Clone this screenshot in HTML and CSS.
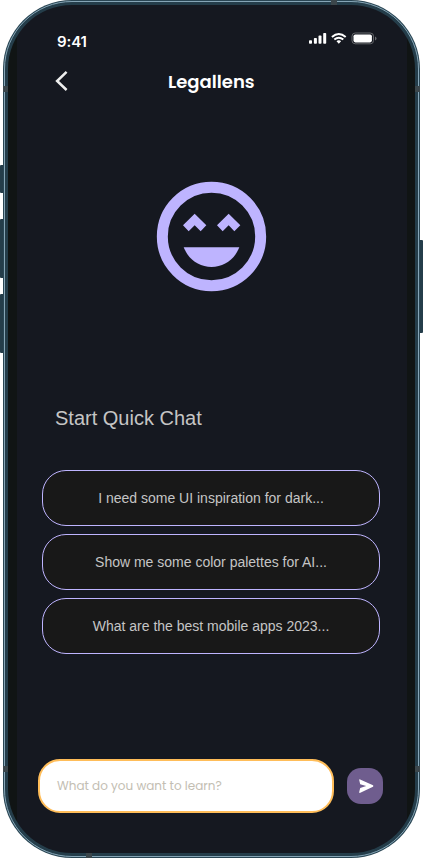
FILE: index.html
```html
<!DOCTYPE html>
<html lang="en">
<head>
<meta charset="utf-8">
<title>Legallens</title>
<link rel="stylesheet" href="styles.css">
</head>
<body>
<div class="device">
  <i class="key key-mute"></i><i class="key key-up"></i><i class="key key-down"></i><i class="key key-power"></i>
  <div class="frame">
    <div class="bezel">
      <main class="screen">
        <div class="status">
          <span class="time">9:41</span>
          <svg class="indicators" width="68" height="14" viewBox="0 0 68 14">
            <g fill="#fff">
              <rect x="0" y="8.2" width="3" height="3.6" rx=".8"/><rect x="4.9" y="6" width="3" height="5.8" rx=".8"/><rect x="9.5" y="3.6" width="3" height="8.2" rx=".8"/><rect x="14.2" y="1" width="3" height="10.800" rx=".8"/>
              <path d="M29.800 8.300q1.300-.1 2.300.9l-2.300 2.600-2.300-2.600q1-1 2.300-.9z"/>
            </g>
            <g fill="none" stroke="#fff" stroke-width="2"><path d="M22.900 4.900Q29.800-1 36.700 4.900"/><path d="M25.300 7.600Q29.800 3.800 34.300 7.600"/></g>
            <rect x="43" y="1" width="21.500" height="10.800" rx="3.200" fill="none" stroke="#66686c"/>
            <rect x="44.500" y="2.400" width="18.400" height="8" rx="1.800" fill="#fff"/>
            <path d="M66 4.500q1.500.6 1.500 2t-1.500 2z" fill="#66686c"/>
          </svg>
        </div>
        <header class="topbar">
          <svg class="back" width="14" height="22" viewBox="0 0 14 22"><path d="M11.600 1.800 2.100 11l9.500 9" fill="none" stroke="#eee" stroke-width="2.500"/></svg>
          <h1>Legallens</h1>
        </header>
        <svg class="smile" viewBox="0 0 405 405">
          <circle cx="199.500" cy="199.500" r="147.500" fill="none" stroke="#beb4ff" stroke-width="33"/>
          <g fill="#beb4ff"><path d="M149 131 184 166 167 184 149 166 131 184 114 166z"/><path d="M251 131 286 166 268 184 251 166 233 184 216 166z"/><path d="M116 232H283C269 268 236 291 199.500 291S130 268 116 232z"/></g>
        </svg>
        <h2>Start Quick Chat</h2>
        <div class="prompts">
          <button>I need some UI inspiration for dark...</button>
          <button>Show me some color palettes for AI...</button>
          <button>What are the best mobile apps 2023...</button>
        </div>
        <div class="composer">
          <div class="field"><span>What do you want to learn?</span></div>
          <button class="send" aria-label="Send"><svg width="36" height="36" viewBox="0 0 36 36"><path d="M12.600 11.300 26 17.300q.8.700 0 1.400L12.800 25q-.8 0-.6-.9l1-4.200 6-1.900-6-1.700-1-4.300q0-.7.400-.7z" fill="#fff"/></svg></button>
        </div>
      </main>
    </div>
  </div>
  <i class="band band-top"></i><i class="band band-left"></i><i class="band band-right"></i><i class="band band-left low"></i><i class="band band-right low"></i><i class="band band-bottom"></i>
</div>
</body>
</html>
```
FILE: styles.css
```css
* { box-sizing: border-box; }
body { margin: 0; background: #fff; overflow: hidden; }
.device { position: relative; width: 423px; height: 858px; padding: 0 3px; }
.frame { position: relative; width: 417px; height: 858px; border-radius: 69px; padding: 1px; background: #294553; }
.bezel { height: 100%; border: 1px solid #86a5b6; border-radius: 68px; background: #243d4a; padding: 3px; overflow: hidden; }
.screen { height: 848px; border-radius: 64px; padding: 26px 8px 0 9px; background: linear-gradient(90deg, #101414 9px, #151820 9px, #151820 calc(100% - 8px), #101414 calc(100% - 8px)); display: flex; flex-direction: column; }
.key { position: absolute; left: 0; width: 3px; background: #243d4a; border-radius: 1px 0 0 1px; }
.key-mute { top: 165px; height: 28px; }
.key-up { top: 219px; height: 59px; }
.key-down { top: 294px; height: 59px; }
.key-power { left: 420px; top: 240px; height: 93px; border-radius: 0 1px 1px 0; }
.band { position: absolute; background: #3b464b; width: 5px; height: 6px; }
.band-top { left: 331px; top: 0; width: 6px; height: 5px; }
.band-left { left: 3px; top: 86px; }
.band-right { left: 415px; top: 86px; }
.low { top: 766px; }
.band-bottom { left: 86px; top: 853px; width: 6px; height: 5px; }
.status { height: 34px; display: flex; justify-content: space-between; padding: 0 30px 0 40px; }
.time { font: 600 15px/22px Inter, sans-serif; color: #fff; letter-spacing: -.1px; }
.indicators { margin-top: 1px; }
.topbar { height: 44px; display: flex; padding-left: 38px; }
.back { margin-top: 5px; }
h1 { margin: 5px 0 0 99px; font: 600 18px/24px Poppins, Inter, sans-serif; color: #fff; }
.smile { width: 135px; height: 135px; margin: 61px 0 0 128px; flex: none; }
h2 { margin: 100px 0 0 38px; font: 400 20px/26px "Liberation Sans", Arial, sans-serif; color: #c5c5c5; }
.prompts { margin: 39px 27px 0 25px; display: flex; flex-direction: column; gap: 8px; }
button { border: 0; padding: 0; }
.prompts button { height: 56px; border: 1px solid #beb4ff; border-radius: 24px; background: #181818; color: #c5c5c5; font: 14px/20px "Liberation Sans", Arial, sans-serif; white-space: nowrap; }
.composer { margin: 105px 0 0 21px; display: flex; align-items: center; gap: 13px; }
.field { width: 296px; height: 54px; border: 2px solid #ffbd59; border-radius: 22px; background: #fff; padding: 0 17px; display: flex; align-items: center; font: 400 12px/18px Poppins, Inter, sans-serif; color: #c3beb3; }
.send { width: 36px; height: 36px; border-radius: 14px; background: #6f5d8e; }
.send svg { display: block; }
```
